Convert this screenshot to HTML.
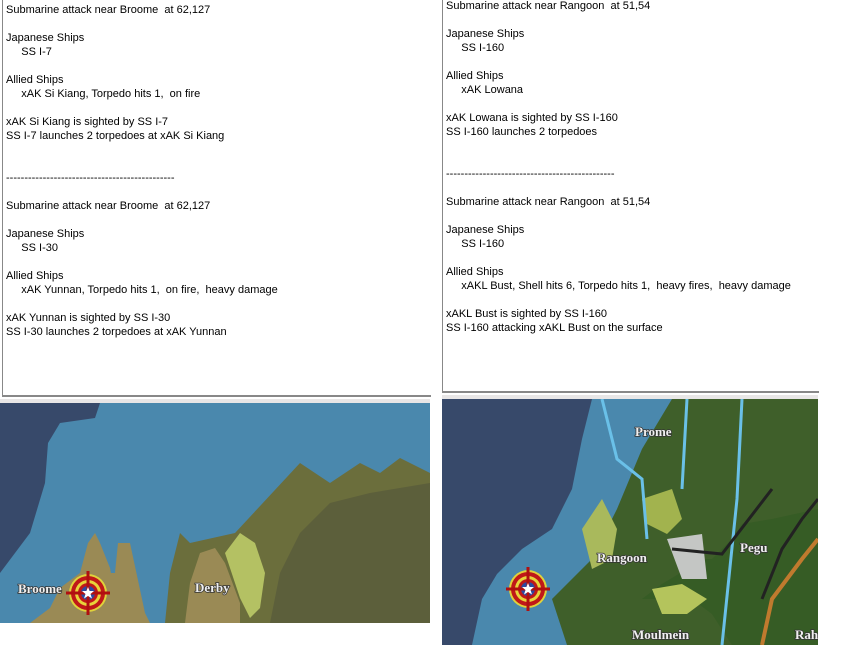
<!DOCTYPE html>
<html><head><style>
body{margin:0;width:860px;height:647px;background:#fff;position:relative;overflow:hidden;font-family:"Liberation Sans",sans-serif;font-size:11px;color:#000}
.box{position:absolute;background:#fff;border-left:1px solid #888;border-bottom:2px solid #888}
.t{position:absolute;white-space:pre;line-height:14px}
.lbl{font-family:"Liberation Serif",serif;font-weight:bold;fill:#f0f0f0;font-size:13px;paint-order:stroke;stroke:#333;stroke-width:1.5}
</style></head><body>
<div class="box" style="left:2px;top:-2px;width:428px;height:397px"></div>
<div class="t" style="left:6px;top:3px">Submarine attack near Broome  at 62,127

Japanese Ships
     SS I-7

Allied Ships
     xAK Si Kiang, Torpedo hits 1,  on fire

xAK Si Kiang is sighted by SS I-7
SS I-7 launches 2 torpedoes at xAK Si Kiang


----------------------------------------------

Submarine attack near Broome  at 62,127

Japanese Ships
     SS I-30

Allied Ships
     xAK Yunnan, Torpedo hits 1,  on fire,  heavy damage

xAK Yunnan is sighted by SS I-30
SS I-30 launches 2 torpedoes at xAK Yunnan</div>
<div class="box" style="left:442px;top:-2px;width:376px;height:393px"></div>
<div class="t" style="left:446px;top:-1px">Submarine attack near Rangoon  at 51,54

Japanese Ships
     SS I-160

Allied Ships
     xAK Lowana

xAK Lowana is sighted by SS I-160
SS I-160 launches 2 torpedoes


----------------------------------------------

Submarine attack near Rangoon  at 51,54

Japanese Ships
     SS I-160

Allied Ships
     xAKL Bust, Shell hits 6, Torpedo hits 1,  heavy fires,  heavy damage

xAKL Bust is sighted by SS I-160
SS I-160 attacking xAKL Bust on the surface</div>
<div style="position:absolute;left:0;top:399px;width:430px;height:4px;background:#e8e6e6"></div>
<svg style="position:absolute;left:0;top:403px" width="430" height="220">
<rect width="430" height="220" fill="#4a88ad"/>
<path d="M0 0 H100 L95 15 60 20 48 40 45 80 30 130 0 170Z" fill="#37496a"/>
<path d="M165 220 L170 170 180 130 190 140 235 130 300 60 330 80 360 60 380 70 400 55 430 70 V220Z" fill="#6b6e3c"/>
<path d="M30 220 L50 205 60 185 80 170 88 140 95 130 100 140 110 165 120 220Z" fill="#9a8a55"/>
<path d="M100 220 L108 170 115 170 118 140 130 140 145 210 150 220Z" fill="#9a8a55"/>
<path d="M185 220 L190 180 200 150 215 145 225 160 240 200 240 220Z" fill="#9a8a55"/>
<path d="M225 150 L240 130 255 140 265 170 260 205 250 215 240 195Z" fill="#b4c163"/>
<path d="M270 220 L280 170 300 130 330 100 370 90 430 80 V220Z" fill="#55593a" opacity=".7"/>
<text x="18" y="190" class="lbl">Broome</text>
<text x="195" y="189" class="lbl">Derby</text>
<g transform="translate(88,190)"><circle r="19" fill="#e0d23a"/><circle r="17" fill="#c01818"/><circle r="13" fill="#e8d43a"/><circle r="10" fill="#c01818"/><circle r="7" fill="#2c4aa0"/><path d="M-22 0H22M0 -22V22" stroke="#b01010" stroke-width="3"/><path d="M0-6 1.6-2 6-2 2.5 1 4 5.5 0 3 -4 5.5 -2.5 1 -6 -2 -1.6 -2Z" fill="#fff"/></g>
</svg>
<div style="position:absolute;left:442px;top:395px;width:376px;height:4px;background:#e8e6e6"></div>
<svg style="position:absolute;left:442px;top:399px" width="376" height="246">
<rect width="376" height="246" fill="#4a88ad"/>
<path d="M0 0 H150 L140 40 130 90 110 130 80 150 55 175 40 200 30 246 H0Z" fill="#37496a"/>
<path d="M125 246 L110 200 L150 160 L175 110 L200 50 L230 0 H376 V246Z" fill="#3f5f2a"/>
<path d="M200 200 L220 185 245 170 255 160 270 160 290 140 300 125 330 120 376 110 V246 H290 L270 215 250 200Z" fill="#365c25"/>
<path d="M140 130 L160 100 175 130 170 160 150 170Z" fill="#a9b95c"/>
<path d="M225 140 L260 135 265 180 240 180Z" fill="#c4c6c4"/>
<path d="M210 190 L240 185 265 200 245 215 220 215Z" fill="#b4c45c"/>
<path d="M200 100 L230 90 240 120 225 135 205 125Z" fill="#a2b34e"/>
<path d="M160 0 L175 60 200 80 205 140 M245 0 L240 90 M300 0 L295 100 280 246" stroke="#6ac0e8" stroke-width="3" fill="none"/>
<path d="M230 150 L280 155 330 90 M320 200 L340 150 360 120 376 100" stroke="#222" stroke-width="3" fill="none"/>
<path d="M320 246 L330 200 360 160 376 140" stroke="#c07a2e" stroke-width="4" fill="none"/>
<text x="193" y="37" class="lbl">Prome</text>
<text x="155" y="163" class="lbl">Rangoon</text>
<text x="298" y="153" class="lbl">Pegu</text>
<text x="190" y="240" class="lbl">Moulmein</text>
<text x="353" y="240" class="lbl">Rah</text>
<g transform="translate(86,190)"><circle r="19" fill="#e0d23a"/><circle r="17" fill="#c01818"/><circle r="13" fill="#e8d43a"/><circle r="10" fill="#c01818"/><circle r="7" fill="#2c4aa0"/><path d="M-22 0H22M0 -22V22" stroke="#b01010" stroke-width="3"/><path d="M0-6 1.6-2 6-2 2.5 1 4 5.5 0 3 -4 5.5 -2.5 1 -6 -2 -1.6 -2Z" fill="#fff"/></g>
</svg>
</body></html>
